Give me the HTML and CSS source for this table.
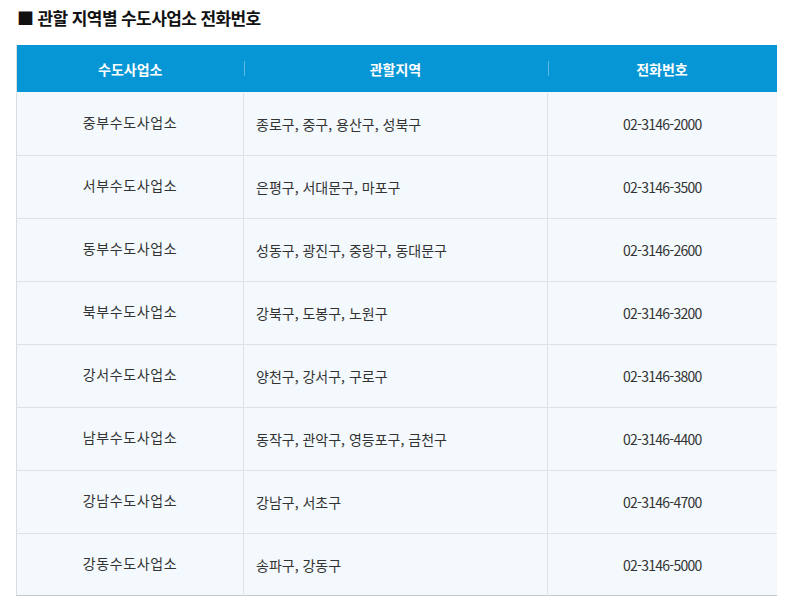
FILE: index.html
```html
<!DOCTYPE html>
<html lang="ko">
<head>
<meta charset="utf-8">
<link rel="stylesheet" href="styles.css">
</head>
<body>
<h2 class="title">■ 관할 지역별 수도사업소 전화번호</h2>
<table class="tbl">
  <colgroup><col class="c1"><col class="c2"><col class="c3"></colgroup>
  <thead>
    <tr><th>수도사업소</th><th>관할지역</th><th>전화번호</th></tr>
  </thead>
  <tbody>
    <tr><td>중부수도사업소</td><td class="area">종로구, 중구, 용산구, 성북구</td><td class="tel">02-3146-2000</td></tr>
    <tr><td>서부수도사업소</td><td class="area">은평구, 서대문구, 마포구</td><td class="tel">02-3146-3500</td></tr>
    <tr><td>동부수도사업소</td><td class="area">성동구, 광진구, 중랑구, 동대문구</td><td class="tel">02-3146-2600</td></tr>
    <tr><td>북부수도사업소</td><td class="area">강북구, 도봉구, 노원구</td><td class="tel">02-3146-3200</td></tr>
    <tr><td>강서수도사업소</td><td class="area">양천구, 강서구, 구로구</td><td class="tel">02-3146-3800</td></tr>
    <tr><td>남부수도사업소</td><td class="area">동작구, 관악구, 영등포구, 금천구</td><td class="tel">02-3146-4400</td></tr>
    <tr><td>강남수도사업소</td><td class="area">강남구, 서초구</td><td class="tel">02-3146-4700</td></tr>
    <tr><td>강동수도사업소</td><td class="area">송파구, 강동구</td><td class="tel">02-3146-5000</td></tr>
  </tbody>
</table>
</body>
</html>
```
FILE: styles.css
```css
html, body { margin: 0; padding: 0; background: #fff; }
body {
  padding: 8px 30px 0 16px;
  font-family: "Noto Sans CJK KR", "Noto Sans", sans-serif;
  color: #333;
}
.title {
  margin: 0 0 17px 1px;
  font-size: 17px;
  line-height: 20px;
  font-weight: 700;
  color: #111;
  letter-spacing: -0.6px;
}
.tbl {
  width: 760px;
  border-collapse: collapse;
  table-layout: fixed;
  border-left: 1px solid #dcdcdc;
  border-bottom: 1px solid #c8c8c8;
}
.c1 { width: 227px; }
.c2 { width: 304px; }
.c3 { width: 229px; }
.tbl th {
  height: 47px;
  padding: 0;
  background: #0796d5;
  color: #fff;
  font-size: 14px;
  line-height: 20px;
  font-weight: 700;
  text-align: center;
  position: relative;
}
.tbl th + th::before {
  content: "";
  position: absolute;
  left: 0;
  top: 16px;
  height: 15px;
  width: 1px;
  background: #5cb8e4;
}
.tbl td {
  padding: 21px 0;
  line-height: 20px;
  background: #f3f9fd;
  font-size: 14px;
  text-align: center;
  border-top: 1px solid #dde2e6;
  border-left: 1px solid #dde2e6;
  vertical-align: top;
}
.tbl tbody tr:first-child td { border-top-color: #f3f9fd; }
.tbl tbody tr:last-child td { padding-bottom: 20px; }
.tbl td:first-child { border-left: none; padding: 19px 0 23px; letter-spacing: 0.6px; }
.tbl tbody tr:last-child td:first-child { padding-bottom: 22px; }
.tbl td.area { text-align: left; padding-left: 12px; }
.tbl td.tel { letter-spacing: -0.75px; }
```
